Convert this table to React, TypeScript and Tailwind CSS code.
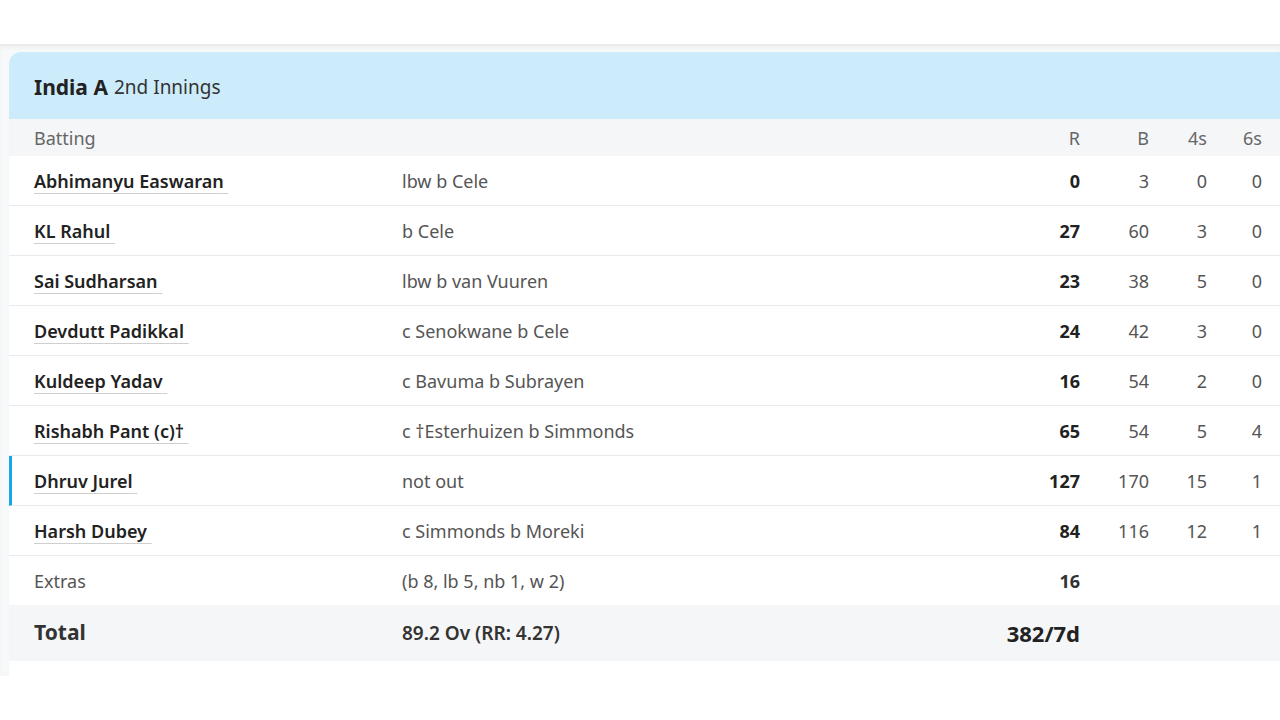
import React from 'react';

type Batter = {
  name: string;
  dismissal: string;
  r: number;
  b: number;
  fours: number;
  sixes: number;
  active?: boolean;
};

const batters: Batter[] = [
  { name: 'Abhimanyu Easwaran', dismissal: 'lbw b Cele', r: 0, b: 3, fours: 0, sixes: 0 },
  { name: 'KL Rahul', dismissal: 'b Cele', r: 27, b: 60, fours: 3, sixes: 0 },
  { name: 'Sai Sudharsan', dismissal: 'lbw b van Vuuren', r: 23, b: 38, fours: 5, sixes: 0 },
  { name: 'Devdutt Padikkal', dismissal: 'c Senokwane b Cele', r: 24, b: 42, fours: 3, sixes: 0 },
  { name: 'Kuldeep Yadav', dismissal: 'c Bavuma b Subrayen', r: 16, b: 54, fours: 2, sixes: 0 },
  { name: 'Rishabh Pant (c)†', dismissal: 'c †Esterhuizen b Simmonds', r: 65, b: 54, fours: 5, sixes: 4 },
  { name: 'Dhruv Jurel', dismissal: 'not out', r: 127, b: 170, fours: 15, sixes: 1, active: true },
  { name: 'Harsh Dubey', dismissal: 'c Simmonds b Moreki', r: 84, b: 116, fours: 12, sixes: 1 },
];

const font = { fontFamily: '"Noto Sans", "Open Sans", Arial, sans-serif' };

const App: React.FC = () => {
  return (
    <div className="w-[1280px] h-[720px] bg-white overflow-hidden" style={font}>
      <div className="h-[44px] bg-white" />
      <div className="h-[632px] bg-[#f7f8fa] pl-[9px] pt-[8px] shadow-[inset_0_4px_5px_-2px_rgba(0,0,0,0.08)]">
        <div className="h-full bg-white rounded-tl-xl overflow-hidden">
          <div className="h-[67px] bg-[#cdecfb] flex items-center pl-[25px] pt-[4px]">
            <span className="text-[21px] font-bold text-[#222]">India A</span>
            <span className="text-[19px] text-[#333] ml-[6px]">2nd Innings</span>
          </div>

          <div className="h-[37px] bg-[#f5f6f8] flex items-center pl-[25px] pr-[18px] pt-[2px] text-[18px] text-[#666]">
            <div className="w-[368px]">Batting</div>
            <div className="flex-1" />
            <div className="w-[60px] text-right">R</div>
            <div className="w-[69px] text-right">B</div>
            <div className="w-[58px] text-right">4s</div>
            <div className="w-[55px] text-right">6s</div>
          </div>

          {batters.map((p) => (
            <div
              key={p.name}
              className={`h-[50px] flex items-center pr-[18px] pt-[1px] border-b border-[#e8e9eb] text-[18px] ${
                p.active ? 'border-l-[3px] border-l-[#1aa6e4] pl-[22px]' : 'pl-[25px]'
              }`}
            >
              <div className="w-[368px]">
                <span className="font-semibold text-[#222] underline decoration-[#cfcfcf] decoration-1 underline-offset-[5px]">
                  {p.name}{'\u00a0'}
                </span>
              </div>
              <div className="flex-1 text-[#555]">{p.dismissal}</div>
              <div className="w-[60px] text-right font-bold text-[#222]">{p.r}</div>
              <div className="w-[69px] text-right text-[#555]">{p.b}</div>
              <div className="w-[58px] text-right text-[#555]">{p.fours}</div>
              <div className="w-[55px] text-right text-[#555]">{p.sixes}</div>
            </div>
          ))}

          <div className="h-[49px] flex items-center pl-[25px] pr-[18px] pt-[1px] text-[18px]">
            <div className="w-[368px] text-[#555]">Extras</div>
            <div className="flex-1 text-[#555]">(b 8, lb 5, nb 1, w 2)</div>
            <div className="w-[60px] text-right font-bold text-[#333]">16</div>
            <div className="w-[182px]" />
          </div>

          <div className="h-[56px] bg-[#f5f6f8] flex items-center pl-[25px] pr-[18px]">
            <div className="w-[368px] text-[21px] font-bold text-[#333]">Total</div>
            <div className="flex-1 text-[19px] font-semibold text-[#333]">89.2 Ov (RR: 4.27)</div>
            <div className="w-[120px] text-right text-[22px] font-bold text-[#222]">382/7d</div>
            <div className="w-[182px]" />
          </div>
        </div>
      </div>
    </div>
  );
};

export default App;
